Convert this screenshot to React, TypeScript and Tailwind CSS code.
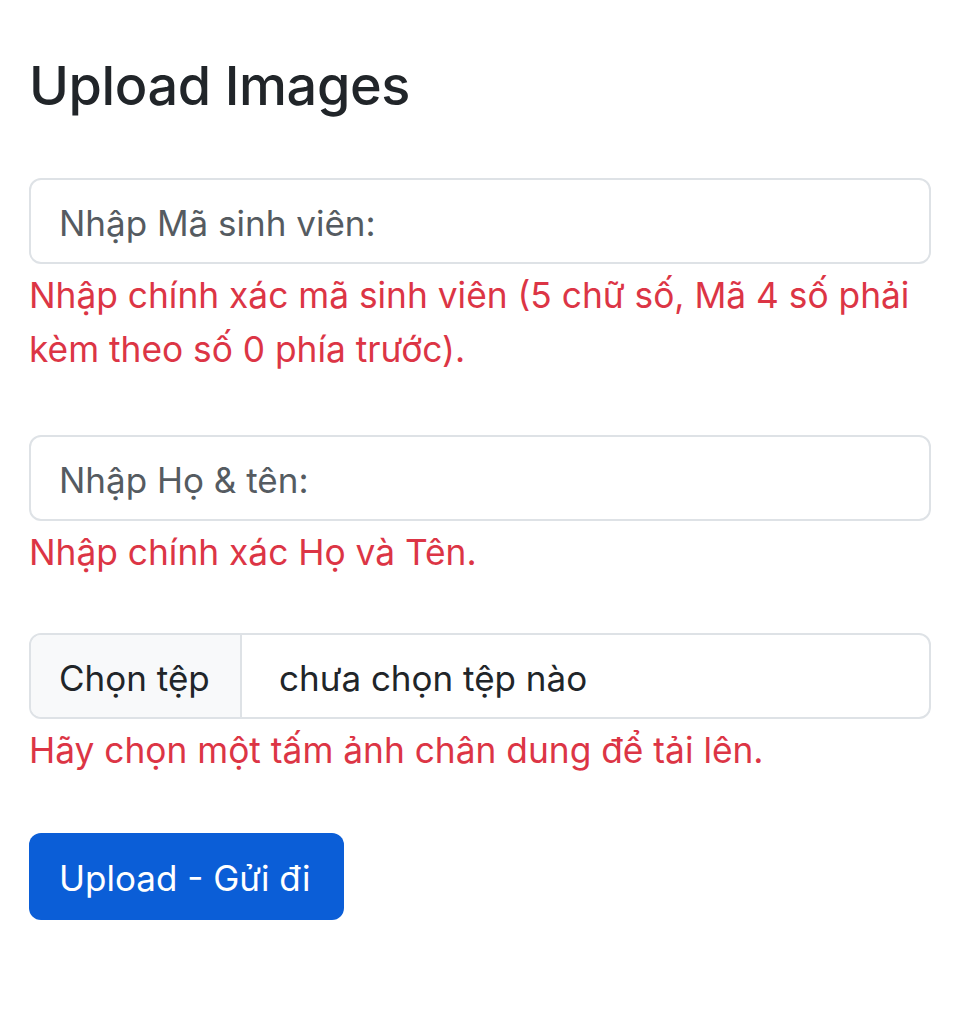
export default function App() {
  return (
    <div className="min-h-screen bg-white px-[29px] pt-[54px] font-['Inter','Noto_Sans',sans-serif] text-[#212529]">
      <h1 className="text-[54px] font-medium leading-[1.2] tracking-[-0.4px]">Upload Images</h1>

      <form className="mt-[59px] w-[902px]" onSubmit={e => e.preventDefault()}>
        {/* Student id */}
        <div>
          <input
            type="text"
            placeholder="Nhập Mã sinh viên:"
            className="block w-full h-[86px] rounded-[12px] border-2 border-[#dee2e6] bg-white px-[28px] pt-[5px] text-[35px] text-[#212529] placeholder:text-[#555b61] outline-none"
          />
          <div className="mt-[5px] text-[35.3px] leading-[54px] text-[#dc3545]">
            Nhập chính xác mã sinh viên (5 chữ số, Mã 4 số phải kèm theo số 0 phía trước).
          </div>
        </div>

        {/* Full name */}
        <div className="mt-[58px]">
          <input
            type="text"
            placeholder="Nhập Họ & tên:"
            className="block w-full h-[86px] rounded-[12px] border-2 border-[#dee2e6] bg-white px-[28px] pt-[5px] text-[35px] text-[#212529] placeholder:text-[#555b61] outline-none"
          />
          <div className="mt-[5px] text-[35.3px] leading-[54px] text-[#dc3545]">
            Nhập chính xác Họ và Tên.
          </div>
        </div>

        {/* File picker */}
        <div className="mt-[53px]">
          <label className="flex h-[86px] w-full cursor-pointer overflow-hidden rounded-[12px] border-2 border-[#dee2e6] bg-white pt-[4px] text-[35px]">
            <span className="-mt-[4px] flex w-[211px] shrink-0 items-center border-r-2 border-[#dee2e6] bg-[#f8f9fa] pl-[28px] pt-[4px]">
              Chọn tệp
            </span>
            <span className="flex items-center pl-[37px]">chưa chọn tệp nào</span>
            <input type="file" className="hidden" />
          </label>
          <div className="mt-[5px] text-[35.3px] leading-[54px] text-[#dc3545]">
            Hãy chọn một tấm ảnh chân dung để tải lên.
          </div>
        </div>

        <button
          type="submit"
          className="mt-[55px] h-[87px] w-[315px] rounded-[12px] bg-[#0b5ed7] px-[30px] pt-[3px] text-left text-[35px] text-white"
        >
          Upload - Gửi đi
        </button>
      </form>
    </div>
  )
}
